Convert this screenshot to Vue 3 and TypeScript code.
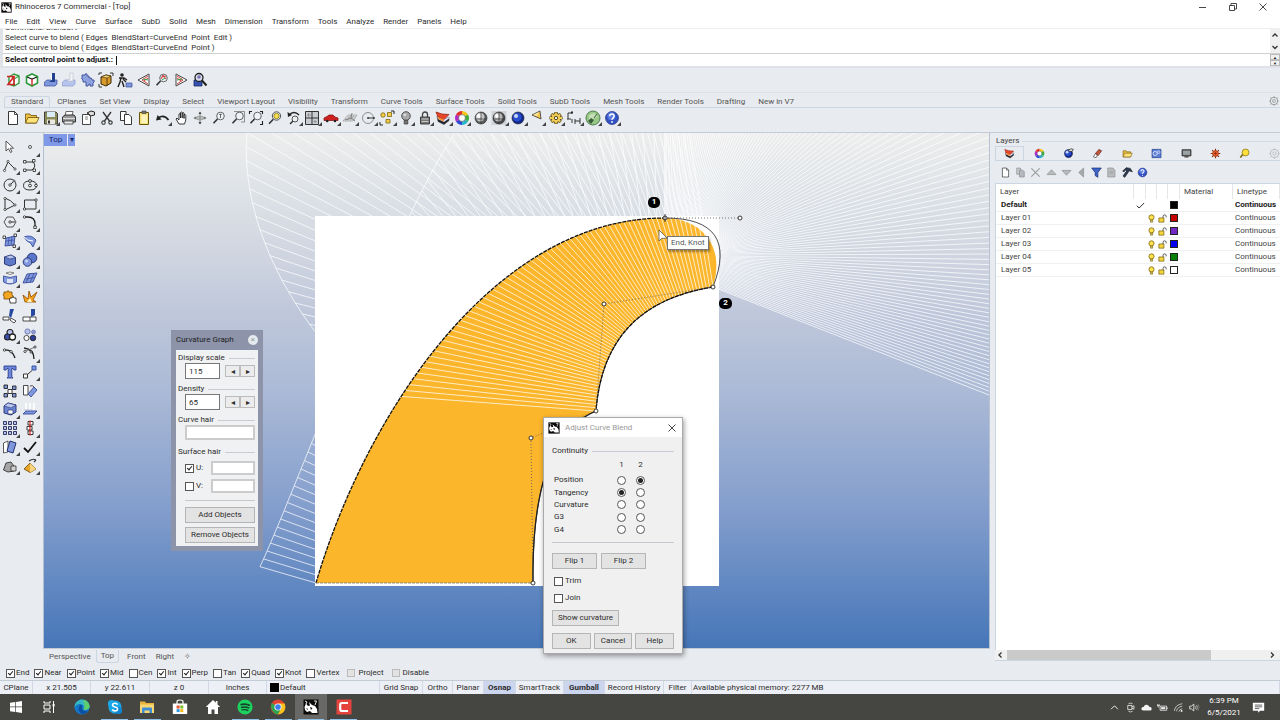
<script setup lang="ts">
import { h, ref } from 'vue'

type Shape = [d: string, fill?: string, stroke?: string, width?: number]
type Point = [number, number]

const c = (x: number, y: number, r: number) =>
  `M${x - r} ${y}a${r} ${r} 0 1 0 ${2 * r} 0a${r} ${r} 0 1 0 ${-2 * r} 0z`
const b = (x: number, y: number, w: number, t: number) => `M${x} ${y}h${w}v${t}h${-w}z`

const N = 'none'
const K = '#222'
const BL = '#7f97dc'
const DB = '#3a4d9c'

const sphere = (dark: string, mid: string, light: string): Shape[] => [
  [c(8, 8, 6), dark, K, 0.6],
  [c(7.2, 7.2, 4.4), mid],
  [c(6, 6, 2), light],
]
const wheel: Shape[] = [
  ['M8 8L8 1A7 7 0 0 1 14 4.5z', '#f5c518'],
  ['M8 8L14 4.5A7 7 0 0 1 14 11.5z', '#3fae3a'],
  ['M8 8L14 11.5A7 7 0 0 1 8 15z', '#2bb5c8'],
  ['M8 8L8 15A7 7 0 0 1 2 11.5z', '#2c49d6'],
  ['M8 8L2 11.5A7 7 0 0 1 2 4.5z', '#b02bc8'],
  ['M8 8L2 4.5A7 7 0 0 1 8 1z', '#e2302c'],
  [c(8, 8, 3.4), '#fff', '#555', 0.6],
]
const layers: Shape[] = [
  ['M2 6L9 10L14 7V10.5L9 14.5L3 11.5z', '#26262e', K, 0.5],
  ['M2 6L9 9.5L14 7V8.5L9 12L3 9z', '#dfe0ff'],
  ['M1 2L7 4L14 4.5L9 9.5L3 7z', '#e8452a', '#8c1b0c', 0.7],
  ['M3 7L9 9.5V11.5L3 9z', '#f58a34'],
]
const help: Shape[] = [
  [c(8, 8, 6.4), '#3352c4', '#1f2f86', 0.8],
  [c(7.4, 6.2, 3.9), '#5a7ae0'],
  ['M5.8 6.2C5.8 3.4 10.2 3.4 10.2 6.1C10.2 7.9 8 7.8 8 9.8', N, '#fff', 1.5],
  [c(8, 12, 0.9), '#fff'],
]
const page: Shape[] = [['M3.5 1.5H9.5L12.5 4.5V14.5H3.5z', '#fff', K, 0.9], ['M9.5 1.5V4.5H12.5', N, K, 0.8]]
const folder: Shape[] = [
  ['M1.5 4H6L7 5.5H12.5V13H1.5z', '#f0c040', '#6b5208', 0.8],
  ['M4 7.5H15L12.5 13H1.5z', '#ffe27a', '#6b5208', 0.8],
]
const lens: Shape[] = [[c(9.5, 6, 3.8), '#eef3f8', '#555', 0.9], ['M6.5 9L2.5 13.3', N, '#333', 1.6]]
const rhino: Shape[] = [
  [b(0.5, 0.5, 15, 15), '#0a0a0a'],
  ['M1.5 8L3 4.5L5 7L7 6.5L6 3L9 6L12 7L14 10L14.5 14H9L7 12L4 13L2 11z', '#fff'],
  ['M11 2L13.5 2L12 6M2 2L4 3L3 5', N, '#fff', 0.9],
  ['M7 8L9.5 9L8 11zM3.5 9L5 10L4 11z', '#0a0a0a'],
]

const icons: Record<string, Shape[]> = {
  rhino, layers, wheel, help, page, folder,
  cubeRed: [['M4 5L9 2L14 4V11L9 14L4 12z', '#fff', '#2f9c3c', 1.4], ['M9 7L14 4M9 7V14', N, '#2f9c3c', 1.1], ['M2 4.5H9L3 12.5H10M9 4.5V12', N, '#d02424', 1.6]],
  cubeGreen: [['M2.5 4.5L8 2L13.5 4.5V11L8 14L2.5 11z', '#fff', '#2f9c3c', 1.6], ['M3 5L8 7L13 5', N, '#222', 1.2], ['M8 7V13.5', N, '#d02424', 1.4]],
  pinBlue: [['M1.5 10L4 8H14V12L12 14H1.5z', BL, DB, 0.7], ['M9 1H12V10H6L9 8z', '#23408f'], ['M8.5 2V8', N, '#fff', 1]],
  pinPale: [['M1.5 10L4 8H14V12L12 14H1.5z', '#b6c4ec', '#8b9bd0', 0.7], ['M9 1H12V9H6L9 7z', '#f4f5f8', '#b9bdc6', 0.6]],
  puzzle: [['M2 3H5Q5 1 7 2L7 4H9V6Q12 5 12 8H14Q15 10 13 11V14H10V12Q8 12 8 14H6V10H3V8Q1 7 2 6z', '#8ea2dd', DB, 0.9]],
  boxGold: [['M3 5L8 3L13 4V11L8 14L3 12z', '#d89a2c', '#3d2b07', 1], ['M3 5L9 6L13 4L8 3z', '#f7d27b', '#3d2b07', 0.6], ['M9 6V14', N, '#3d2b07', 0.8], ['M1 3V1H4M12 1H15V4M1 12V15H4', N, K, 0.9]],
  person: [[c(5, 3, 1.8), K], ['M2 6H7L10 8M4 6L3 10L1 15M5 9L7 15M6 7L9 10', N, K, 1.4], [b(9, 11, 6, 4), BL, DB, 0.7]],
  triLeft: [['M13 2V14L2 8z', '#fff', '#444', 1], ['M12 4L6 8L12 12M12 6L8 9', N, '#cc3a3a', 1], ['M12 8L7 7', N, '#2f9c3c', 1]],
  zoomTri: [...lens, ['M7 7L9 3L12 7M8 5L12 4', N, '#cc3a3a', 1], ['M8 8L11 6', N, '#2f9c3c', 1]],
  triRight: [['M3 2V14L14 8z', '#fff', '#444', 1], ['M4 4L10 8L4 12M4 6L8 9', N, '#cc3a3a', 1], ['M4 8L9 7', N, '#2f9c3c', 1]],
  zoomCyl: [['M2 8H10V14H2z', '#3552b0', '#1a2a66', 0.8], [c(7, 5.5, 4), '#d9e0ef', '#222', 1.3], [c(7, 5, 1.8), '#7d6fb0'], ['M10 8.5L14.5 13.5', N, '#222', 2]],

  save: [['M1.5 2H13L14.5 3.5V14H1.5z', '#8c8c5a', '#333', 0.9], [b(4, 2, 8, 5), '#d9ecf7'], [b(4, 9.5, 8, 4.5), '#e9e9e0'], [b(5, 10.5, 2, 3), '#333']],
  print: [['M5 1.5H12L11 6H4z', '#fff', '#444', 0.8], ['M1.5 7L4 5H13L14.5 7V12H1.5z', '#999', '#222', 0.9], ['M2 8.5H14', N, '#ddd', 1], ['M3 11H12V14H3z', '#eee', '#333', 0.8]],
  props: [['M2.5 4.5H10.5V14.5H2.5z', '#fff', '#333', 0.9], ['M7 3L11 1L14.5 2V5L10 6L9 4z', '#ddd', '#222', 1], ['M5 7H8M5 9H8', N, '#666', 0.8]],
  cut: [['M4 2L10.5 11M12 2L5.5 11', N, '#333', 1.3], [c(4.5, 12.6, 1.7), N, '#333', 1.1], [c(11.5, 12.6, 1.7), N, '#333', 1.1]],
  copy: [['M2.5 1.5H8V10.5H2.5z', '#fff', K, 0.9], ['M6.5 4.5H11L13.5 7V14.5H6.5z', '#fff', K, 0.9]],
  paste: [['M3.5 2.5H12.5V14.5H3.5z', '#f8e27c', '#66570f', 1], [b(6, 1, 4, 2.5), '#777', '#333', 0.6], ['M5.5 5H11V13H5.5z', '#fdf3bd']],
  undo: [['M3 8Q9 4 13.5 10', N, K, 1.8], ['M1 10.5L2.5 5L6.5 9.5z', K]],
  hand: [['M5 14L2 9L3 8L5 10V4Q6 3 6.5 4V8V2.5Q7.5 1.5 8.2 2.5V8V3Q9.2 2 10 3V8.5V4.5Q11.5 4 11.8 5.5V10L10.5 14z', '#fff', K, 0.9]],
  orbit: [['M8 2V14M2 8H14', N, '#777', 0.8], ['M3 8Q8 4 13 8Q8 12 3 8z', N, '#777', 0.7], ['M6.5 4L8 1.5L9.5 4zM6.5 12L8 14.5L9.5 12z', '#444'], ['M4 6.5L1.5 8L4 9.5zM12 6.5L14.5 8L12 9.5z', '#777']],
  zoomDyn: [...lens, ['M9.5 4V8M8.3 5L9.5 3.8L10.7 5', N, '#444', 0.8]],
  zoomWin: [...lens, ['M4 1.5H14.5V12H11', N, '#777', 0.8]],
  zoomExt: [...lens, ['M1.5 4V1.5H4M12 1.5H14.5V4M14.5 11V14.5H12', N, K, 1.1]],
  zoomSel: [[c(9.5, 6, 4.2), '#e9eef3', '#444', 0.9], [c(9.5, 6, 2.7), '#f6df4d', '#7a690d', 0.7], ['M6.3 9.2L2 13.8', N, '#333', 1.6]],
  undoView: [['M3 5Q8 0 13 5', N, K, 1.4], ['M1.5 2L2 7L6 5z', K], [c(9, 9, 3), '#eee', '#444', 0.9], ['M7 11L4 14', N, '#333', 1.5]],
  views: [['M1.5 1.5H14.5V14.5H1.5z', '#c9ccd0', '#333', 1], ['M8 1.5V14.5M1.5 8H14.5', N, '#333', 1], ['M4.5 3V7M3 5H7M11 10V13M9.5 11.5H13', N, '#777', 0.6]],
  car: [['M1 8L4 6.5L6 5H10L12 7L15 8V10.5H1z', '#cf2020', '#7d0c0c', 0.7], [c(4.2, 11, 1.3), '#222'], [c(12, 11, 1.3), '#222']],
  cplane: [['M1 11L6 5H15L11 11zM3 9H13M5 7H14M5 11L9 5M8 11L12 5', N, '#999', 0.7], ['M3 10L9 8L10 3M9 8L13 11', N, '#777', 0.9]],
  circleLine: [[c(7, 8, 5.5), N, '#777', 0.8], ['M7 8H13', N, '#333', 1], [c(7, 8, 0.9), '#333'], [c(13, 8, 0.9), '#333']],
  snapShapes: [[c(4, 5, 2.2), '#f4cf4d', '#7c640c', 0.8], [b(8.5, 2.5, 4, 4), '#f4cf4d', '#7c640c', 0.8], [b(7, 9.5, 4, 3.5), '#f4cf4d', '#7c640c', 0.8], ['M1 12V15H4M12 1H15V4', N, K, 1]],
  bulb: [[c(8, 6, 4.3), '#aaa', '#444', 0.9], ['M6.2 10.3H9.8V14H6.2z', '#777', '#333', 0.7], [c(6.8, 4.8, 1.4), '#ddd']],
  lock: [['M5.5 7V4.5Q5.5 2 8 2Q10.5 2 10.5 4.5V7', N, '#444', 1.3], [b(3.5, 7, 9, 7), '#777', '#333', 0.9], ['M4.5 9H11.5M4.5 11.5H11.5', N, '#ddd', 0.8]],
  sphereA: [...sphere('#5a5a5a', '#c9c9c9', '#fff'), ['M8 2V14M2.5 9H13.5', N, '#333', 0.7]],
  sphereB: [[b(0.5, 1, 15, 14), '#cfd3d8'], ...sphere('#4c4c4c', '#b9b9b9', '#fff'), ['M8 2V14M2.5 9H13.5', N, '#333', 0.7]],
  sphereBlue: sphere('#12268e', '#2a4fcc', '#c9d8ff'),
  spot: [['M3 5L11 1L12 9z', '#f7c548', '#444', 0.9], ['M4 5L10 2L8 6z', '#fde7a4']],
  gear: [['M8 2V4.5M8 11.5V14M1.5 8H4M12 8H14.5M3.2 4.2L5.2 5.7M10.8 10.3L12.8 11.8M3.2 11.8L5.2 10.3M10.8 5.7L12.8 4.2', N, '#4e3e08', 3.2], [c(8, 8, 4.6), '#f2cd57', '#4e3e08', 0.9], ['M8 2.5V4.5M8 11.5V13.5M2 8H4M12 8H14M3.6 4.5L5.2 5.7M10.8 10.3L12.4 11.5M3.6 11.5L5.2 10.3M10.8 5.7L12.4 4.5', N, '#f2cd57', 1.8], [c(8, 8, 1.7), '#e9ecef', '#4e3e08', 0.9]],
  dims: [['M2 3H6M2 3V9M1 9H5M6 9V13M9 9V14M9 11H14M14 8V14', N, '#333', 1], [b(5, 1.5, 2, 2), K]],
  globe: [[c(8, 8, 7), '#97c984', '#48734a', 0.9], ['M4 5L9 3L13 7L9 8L7 12L4 10z', '#c4dfb8'], ['M3 11L6 8L9 10L6 14z', '#3a5c38'], ['M9 8L12 4', N, '#3a5c38', 1]],

  pointer: [['M4 2V12L6.5 9.7L8.5 13.5L10 12.7L8.2 9.2H11.5z', '#fff', '#444', 0.9]],
  point: [[c(8, 8, 1.5), '#fff', '#444', 0.9]],
  polyline: [['M2 13L6 4L13 11', N, '#333', 1], [c(2.5, 12.5, 1.1), '#fff', K, 0.7], [c(6, 3.5, 1.1), '#fff', K, 0.7], [c(13, 11, 1.1), '#fff', K, 0.7]],
  ctrlCurve: [['M3 4H11Q15 8 10 12H3', N, '#333', 1], [b(1.5, 2.5, 2.5, 2.5), '#fff', K, 0.8], [b(10.5, 1.5, 2.5, 2.5), '#fff', K, 0.8], [b(1.5, 11, 2.5, 2.5), '#fff', K, 0.8], [b(11, 11, 2.5, 2.5), '#fff', K, 0.8]],
  circle: [[c(8, 8, 6), N, '#333', 1], ['M8 8L12 4', N, '#333', 1], [c(8, 8, 1.2), '#fff', K, 0.8], [c(12, 4, 1), '#fff', K, 0.7]],
  ellipse: [['M1.5 8.5Q1.5 4 8 4Q14.5 4 14.5 8.5Q14.5 13 8 13Q1.5 13 1.5 8.5z', N, '#333', 1], [c(8, 8.5, 1.4), '#fff', K, 0.9], [c(8, 4, 1.4), '#fff', K, 0.9], [c(14, 8.5, 1.3), '#fff', K, 0.9]],
  arcTri: [['M3 2V14L13 9Q9 4 3 2', N, '#333', 1], [c(3, 2.5, 1.1), '#fff', K, 0.7], [c(3, 13.5, 1.1), '#fff', K, 0.7], [c(13, 9, 1.1), '#fff', K, 0.7]],
  rect: [[b(2.5, 4, 11.5, 9), N, '#333', 1], [c(2.5, 13, 1.2), '#fff', K, 0.8], [c(14, 4, 1.2), '#fff', K, 0.8]],
  polygon: [['M5 3H11L14 8L11 13H5L2 8z', N, '#444', 0.9], ['M8 8H13', N, '#333', 1], [c(8, 8, 1.2), '#fff', K, 0.8]],
  fillet: [['M2 3H6Q13 3 13 10V14', N, '#222', 1.3], [c(2.5, 3, 1.2), '#fff', K, 0.8], [b(11.8, 12, 2.5, 2.5), '#fff', K, 0.8]],
  surfPts: [['M4 5L13 3L12 12L3 13z', BL, DB, 0.9], ['M7 4L6 13M10 3.5L9 12.5M3.5 8L12.5 7', N, DB, 0.7], [b(1, 3, 2.5, 2.5), '#fff', K, 0.8], [b(12, 1, 2.5, 2.5), '#fff', K, 0.8], [b(11, 12, 2.5, 2.5), '#fff', K, 0.8]],
  surfEdge: [['M2 4Q9 1 14 7L11 14Q9 9 5 8z', BL, DB, 0.9], ['M2 4Q5 8 11 8', N, '#fff', 1]],
  cube: [['M2.5 5L9 3L13.5 5.5V12L8 14L2.5 12z', '#5f79c9', '#22306f', 0.9], ['M2.5 5L9 3L13.5 5.5L8 7z', '#b8c6f0', '#22306f', 0.6]],
  spheres: [[c(10, 6, 4.8), '#5a76cc', '#22306f', 0.9], [c(5.5, 10, 4.3), '#7f97dc', '#22306f', 0.9], [c(4.5, 9, 1.5), '#c7d3f7']],
  pipe: [['M1.5 6Q8 9 14.5 6V12Q8 16 1.5 12z', BL, DB, 0.9], ['M5 9H11V13H5z', '#dfe5f7'], ['M4 3Q8 1 12 3Q8 6 4 3z', '#fff', '#666', 0.8]],
  mesh: [['M5 4L15 3L11 12L1 13z', BL, DB, 0.9], ['M8 3.5L4 13M12 3.5L8 12.5M3.5 9L13 7.5', N, DB, 0.8]],
  puzzleGold: [['M2 3H5Q6 0 7 3H10V6Q13 7 10 9V10H2V7Q0 5 2 5z', '#f5a623', '#7a4a05', 0.8], ['M8 9H10Q11 6 12 9H14V14H8V12Q6 11 8 10z', '#fff', K, 0.8]],
  explode: [['M3 13L1 6L6 10L7 2L9 8L15 3L11 11L14 13z', '#f9a11b', '#8a4c00', 0.8], ['M5 13L8 9L10 13z', '#fff4c0']],
  trim: [['M8 1H12L9 10L7 8z', '#27499f'], ['M1 9H7V12H1z', '#fff', K, 0.8], ['M9 10L14 13L12 15L8 12z', '#fff', K, 0.8]],
  split: [['M9 1H13V7L9 9z', '#27499f'], ['M1 9H14V13H1z', '#fff', K, 0.8], ['M8 9V13', N, K, 0.8]],
  circles3: [[c(8, 5.5, 3), '#b8c1ec', K, 1.1], [c(5.5, 10, 3), '#3b4fae', K, 1.1], [c(10.5, 10, 3), '#fff', K, 1.3]],
  circles4: [[c(5.5, 4.5, 2.6), '#b8c1ec', '#6a74b0', 0.9], [c(11.5, 5, 2), '#8f9ad8', '#6a74b0', 0.7], [c(4.5, 11, 2.6), '#fff', K, 0.8], [c(11, 11, 2.8), '#2b3d96', K, 0.8]],
  curveEnd: [['M2 5Q10 4 13 13', N, '#222', 1.4], [c(2.5, 5, 1.2), '#fff', K, 0.8], [c(9, 6.7, 1.2), '#fff', K, 0.8]],
  curveHandle: [['M2 3Q12 4 12 14', N, '#222', 1.3], ['M4 6L13 2', N, '#555', 0.8], [c(3, 6.5, 1.1), '#fff', K, 0.8], [c(13, 2, 1.1), '#fff', K, 0.8], [c(9, 7, 1.1), '#fff', K, 0.8]],
  text: [['M2 2H14V6H12L11 4.5H9.8V12.5L11 14H5L6.2 12.5V4.5H5L4 6H2z', '#6d88dc', '#2a3c8c', 0.9]],
  move: [[b(1.5, 10, 4, 4), '#fff', K, 0.9], [b(10, 2, 4, 4), BL, '#27499f', 0.9], ['M6 10L10 6.5', N, '#333', 1]],
  array: [[b(2, 2, 3.5, 3.5), BL, K, 0.9], [b(10.5, 3, 3.5, 3.5), BL, K, 0.9], [b(6, 6.5, 4, 4), '#fff', K, 0.9], [b(2, 10.5, 3.5, 3.5), BL, K, 0.9], [b(10.5, 10.5, 3.5, 3.5), BL, K, 0.9]],
  rotate: [['M1.5 2.5H6V12H1.5z', '#fff', K, 0.8], ['M12 4L15 7L9 14L6 11z', BL, DB, 0.9], ['M8 3Q11 2 12 4', N, K, 0.8]],
  solidCut: [['M2 5L6 2L14 4V11L9 14L2 12z', '#6c86d4', '#22306f', 0.9], ['M2 5L9 7L14 4L6 2z', '#b8c6f0', '#22306f', 0.6], ['M6 9H11V13H6z', '#fff', '#22306f', 0.7]],
  project: [['M1 13L4 10H15L12 13z', BL, DB, 0.9], ['M4 2V9M8 2V9M12 2V9', N, '#fff', 1.6], ['M2.5 8L4 10L5.5 8M6.5 8L8 10L9.5 8', N, '#9ba8cc', 0.7]],
  grid9: [[[1.5, 6.5, 11.5].map(x => [1.5, 6.5, 11.5].map(y => b(x, y, 3, 3)).join('')).join(''), '#b9c4ee', '#222a55', 0.9]],
  align: [[b(6, 1.5, 5, 3.5), '#fff', K, 0.9], [b(5, 6.5, 5, 3.5), '#fff', K, 0.9], [b(6, 11, 5, 3.5), '#fff', K, 0.9], ['M8 0.5V15.5', N, '#d02424', 1.2]],
  flow: [['M1.5 4L6 2V13L1.5 14z', '#fff', '#333', 0.8], ['M8 2L14 4L11 14L5 12z', BL, '#22306f', 1]],
  check: [['M2 9L6 13L14 3', N, '#111', 1.8]],
  prims: [['M1.5 12L4 5L9 4L12 8V13L6 14z', '#a5a5a5', '#333', 0.9], ['M9 8H14V13H9z', '#d2d2d2', '#333', 0.8]],
  pyramid: [['M2 11L8 5L14 11L8 14.5z', '#e7a52b', '#6b4503', 0.8], ['M8 5L14 11L8 14.5z', '#f8d582'], ['M7 3Q11 0 14 2M14 2L12 4', N, '#333', 1.1]],

  sphereHand: [...sphere('#12268e', '#2a4fcc', '#c9d8ff'), ['M8 3L12 1L15 2L13 5L9 5z', '#ddd', '#222', 1]],
  material: [['M2 13L5 8L8 10L6 14z', '#fff', '#333', 0.9], ['M5 8L10 2L14 4L9 11z', '#c8543c', '#4c1f12', 0.9]],
  texture: [[b(1.5, 2, 13, 12), '#5b7ed3', '#1e3c8a', 1], [c(6, 8, 3), N, '#e8eeff', 1.2], [c(11, 6, 2), N, '#e8eeff', 1]],
  monitor: [[b(1.5, 2.5, 13, 9), '#666', K, 1.1], [b(3, 4, 10, 6), '#9aa2a5'], [b(5, 12, 6, 1.8), '#333']],
  sun: [['M8 1V15M1 8H15M3 3L13 13M13 3L3 13', N, '#8a2d10', 1.6], [c(8, 8, 4.3), '#e85a28', '#8a2d10', 0.8], ['M6 8H10M8 6V10', N, '#5c1d08', 0.8]],
  lamp: [['M2 14L5.5 9', N, '#7a6a12', 2.4], [c(9.5, 6.5, 5), '#ffdf3a', '#7a6a12', 1]],
  copyGrey: [['M2.5 1.5H8V10.5H2.5z', '#c5c8cc', '#888', 0.9], ['M6.5 4.5H11L13.5 7V14.5H6.5z', '#b5b8bd', '#888', 0.9]],
  cross: [['M2 2L14 14M14 2L2 14', N, '#9a9a9a', 1.6]],
  up: [['M1.5 11L8 4L14.5 11z', '#b8babd', '#8c8c8c', 1]],
  down: [['M1.5 5L8 12L14.5 5z', '#b8babd', '#8c8c8c', 1]],
  left: [['M11 1.5L4 8L11 14.5z', '#a8aaad', '#8c8c8c', 1]],
  filter: [['M1 1.5H15L10 8V15L6 12.5V8z', '#3e63c9', '#1d2f72', 1]],
  pageGrey: [['M2.5 1.5H10L13 4.5V14.5H2.5z', '#bcbec1', '#8c8c8c', 1], ['M5 6H11M5 8H11M5 10H11', N, '#999', 0.8]],
  hammer: [['M1 6L6 1L12 2L15 7L10.5 5.5L4 15L1.5 13L7 5.5L5 4.5L3 7z', '#2b3a55', '#111', 0.9]],
  bulbOn: [[c(8, 6, 4.6), '#ffe14d', '#6e5a0b', 1.3], ['M6 11H10V14.5H6z', '#d9c760', '#6e5a0b', 1]],
  unlock: [[b(1.5, 7, 9, 7.5), '#f4d53c', '#6e5a0b', 1.2], ['M9 7V4Q9 1.5 11.5 1.5Q14.5 1.5 14.5 4V6', N, '#444', 1.5]],
  tick: [['M1.5 8.5L5.5 12.5L14.5 3.5', N, '#111', 1.6]],
  options: [[c(8, 8, 6), N, '#888', 1.2], [c(8, 8, 2.4), N, '#888', 1.1], ['M8 0.5V3M8 13V15.5M0.5 8H3M13 8H15.5M2.5 2.5L4 4M12 12L13.5 13.5M2.5 13.5L4 12M12 4L13.5 2.5', N, '#888', 1.2]],

  windows: [['M2 3.8L7.3 3V7.6H2zM8 2.9L14 2V7.6H8zM2 8.3H7.3V13L2 12.2zM8 8.3H14V14L8 13.1z', '#fff']],
  taskview: [['M3 2V4H9V2M3 14V12H9V14M3 6H9V10H3zM12.5 2V14', N, '#fff', 1], [b(11.6, 5, 2, 2.4), '#fff']],
  edge: [[c(8, 8, 7.6), '#1677c8'], ['M0.6 9C0 3 5 .4 8 .4C13 .4 15.6 4 15.6 7.5C15.6 10 12 11.5 9.5 10.5C11 8 9 5 6 5C3.5 5 1 6.5 .6 9z', '#35b8c4'], ['M9 1Q15 2 15.6 7.5C15.6 10 12 11.5 9.5 10.5Q12 6 9 1z', '#5fcf6a'], ['M6 6Q3 11 7 14.5Q11 16 14 12Q9 13 8 10Q7 7 8.5 6z', '#0b4f9e']],
  skype: [[c(8, 8, 6.6), '#18a7e8'], [c(4.5, 4.5, 3.6), '#18a7e8'], [c(11.5, 11.5, 3.6), '#0f86d4'], ['M10.6 5.6Q9.8 4.2 8 4.2Q5.5 4.2 5.5 6Q5.5 7.4 8 8Q10.6 8.5 10.6 10.1Q10.6 12 8 12Q6 12 5.3 10.4', N, '#fff', 1.5]],
  explorer: [['M1 2.5H6L7 4H15V14H1z', '#e8b33a'], ['M1 5.5H15V14H1z', '#f9d775'], ['M3 14V9.5Q3 8.5 4 8.5H12Q13 8.5 13 9.5V14H10.5V11.5H5.5V14z', '#3f8fd6']],
  store: [['M5 5V2.5Q5 1 8 1Q11 1 11 2.5V5', N, '#fff', 1.2], [b(0.8, 4.5, 14.4, 10.5), '#fff'], [b(4.6, 6.5, 3, 3), '#e8502b'], [b(8.3, 6.5, 3, 3), '#7dba2a'], [b(4.6, 10.1, 3, 3), '#2a9be0'], [b(8.3, 10.1, 3, 3), '#f6b91c']],
  home: [['M8 1L0.8 8H3V15H6.5V10.5H9.5V15H13V8H15.2L12.5 5.4V2H10.8V3.8z', '#fff']],
  spotify: [[c(8, 8, 7.6), '#1ed15f'], ['M3.5 5.8Q8.5 4.2 13 6.6', N, '#17402a', 1.7], ['M4 8.5Q8.5 7.1 12.2 9.2', N, '#17402a', 1.4], ['M4.5 11Q8.3 10 11.3 11.6', N, '#17402a', 1.2]],
  chrome: [[c(8, 8, 7.4), '#e0432f'], ['M8 8L1.8 4Q-.8 10 5.5 15Q7 15.4 8 15.4L11 10z', '#2da44e'], ['M8 4.5H14.6Q17 11 11.5 14.5Q10 15.3 8 15.4L11.5 9z', '#f8c51c'], [c(8, 8, 3.6), '#fff'], [c(8, 8, 2.8), '#3f7ee8']],
  camtasia: [[b(0.5, 0.5, 15, 15), '#e5443c'], ['M12 4H6Q4.2 4 4.2 6V10Q4.2 12 6 12H12', N, '#fff', 2.2]],
  chevron: [['M3 10.5L8 5.5L13 10.5', N, '#fff', 1.3]],
  meet: [['M4 5H10V11H4zM10 7L13 5.5V10.5L10 9', N, '#eee', 1.2], ['M5 2.5Q8 .5 11 2.5M5 13.5Q8 15.5 11 13.5', N, '#eee', 1.1]],
  cloud: [['M3.5 12.5Q0 12 .6 9Q1.5 7 3.8 7.2Q5 3.6 8.5 4Q11.4 4.4 12 7Q15.5 7 15.6 10Q15.4 12.5 13 12.5z', '#f4f4f4']],
  battery: [['M4.5 6H14V12H4.5z', N, '#eee', 1.2], [b(6, 7.5, 6, 3), '#eee'], [b(14, 8, 1.4, 2), '#eee'], ['M1 3V6Q1 7.5 3 7.5M3 3V6M0.5 5H4', N, '#eee', 1.1]],
  wifi: [['M2 13Q3 4 13.5 2.5M5 13.5Q6 7.5 13.5 6M8.5 14Q9.5 10.5 13.5 9.8', N, '#d5d5d5', 1.2], [c(12.5, 13, 1.3), '#fff']],
  sound: [['M1 6H3.5L7 3V13L3.5 10H1z', N, '#fff', 1.1], ['M9 6Q10.5 8 9 10M11 4.5Q13.5 8 11 11.5', N, '#ddd', 1], ['M13 3Q16.5 8 13 13', N, '#888', 0.9]],
  notice: [['M1 2H15V12H10L7.5 14.5V12H1z', '#fff'], ['M3.5 5H12.5M3.5 7.2H12.5M3.5 9.4H9', N, '#444', 1]],
}

const Glyph = (p: { name: string }) =>
  h('svg', { viewBox: '0 0 16 16', class: 'glyph', 'aria-hidden': 'true' },
    (icons[p.name] ?? []).map(([d, fill, stroke, width]) =>
      h('path', { d, fill: fill ?? N, stroke: stroke ?? N, 'stroke-width': width ?? 1 })))
Glyph.props = ['name']

const menus = ['File', 'Edit', 'View', 'Curve', 'Surface', 'SubD', 'Solid', 'Mesh', 'Dimension', 'Transform', 'Tools', 'Analyze', 'Render', 'Panels', 'Help']
const quickTools = ['cubeRed', 'cubeGreen', 'pinBlue', 'pinPale', 'puzzle', 'boxGold', 'person', 'triLeft', 'zoomTri', 'triRight', 'zoomCyl']
const tabs = ['Standard', 'CPlanes', 'Set View', 'Display', 'Select', 'Viewport Layout', 'Visibility', 'Transform', 'Curve Tools', 'Surface Tools', 'Solid Tools', 'SubD Tools', 'Mesh Tools', 'Render Tools', 'Drafting', 'New in V7']
const activeTab = ref('Standard')
const mainTools = ['page', 'folder', 'save', 'print', 'props', 'cut', 'copy', 'paste', 'undo', 'hand', 'orbit', 'zoomDyn', 'zoomWin', 'zoomExt', 'zoomSel', 'undoView', 'views', 'car', 'cplane', 'circleLine', 'snapShapes', 'bulb', 'lock', 'layers', 'wheel', 'sphereA', 'sphereB', 'sphereBlue', 'spot', 'gear', 'dims', 'globe', 'help']
const plain = new Set(['page', 'folder', 'print', 'props', 'cut', 'copy', 'paste', 'hand', 'orbit', 'zoomDyn', 'zoomWin', 'zoomExt', 'zoomSel', 'sphereA', 'pointer', 'puzzleGold', 'explode', 'trim', 'split', 'circles4', 'curveEnd', 'text', 'array', 'rotate'])
const sideTools = ['pointer', 'point', 'polyline', 'ctrlCurve', 'circle', 'ellipse', 'arcTri', 'rect', 'polygon', 'fillet', 'surfPts', 'surfEdge', 'cube', 'spheres', 'pipe', 'mesh', 'puzzleGold', 'explode', 'trim', 'split', 'circles3', 'circles4', 'curveEnd', 'curveHandle', 'text', 'move', 'array', 'rotate', 'solidCut', 'project', 'grid9', 'align', 'flow', 'check', 'prims', 'pyramid']
const panelTabs = ['layers', 'wheel', 'sphereHand', 'material', 'folder', 'texture', 'monitor', 'sun', 'lamp', 'options']
const panelTools = ['page', 'copyGrey', 'cross', 'up', 'down', 'left', 'filter', 'pageGrey', 'hammer', 'help']
const layerRows = [
  { name: 'Default', color: 'black', current: true },
  { name: 'Layer 01', color: 'red', current: false },
  { name: 'Layer 02', color: 'purple', current: false },
  { name: 'Layer 03', color: 'blue', current: false },
  { name: 'Layer 04', color: 'green', current: false },
  { name: 'Layer 05', color: 'white', current: false },
]

const continuity = ['Position', 'Tangency', 'Curvature', 'G3', 'G4']
const side1 = ref('Tangency')
const side2 = ref('Position')
const trim = ref(false)
const join = ref(false)
const command = ref('')
const displayScale = ref('115')
const density = ref('65')
const hairU = ref(true)
const hairV = ref(false)

const snaps = ref([
  { name: 'End', on: true }, { name: 'Near', on: true }, { name: 'Point', on: true },
  { name: 'Mid', on: true }, { name: 'Cen', on: false }, { name: 'Int', on: true },
  { name: 'Perp', on: true }, { name: 'Tan', on: false }, { name: 'Quad', on: true },
  { name: 'Knot', on: true }, { name: 'Vertex', on: false },
  { name: 'Project', on: false, grey: true }, { name: 'Disable', on: false, grey: true },
])
const modes = ['Grid Snap', 'Ortho', 'Planar', 'Osnap', 'SmartTrack', 'Gumball', 'Record History', 'Filter']
const activeModes = ['Osnap', 'Gumball']
const taskApps = ['windows', 'taskview', 'edge', 'skype', 'explorer', 'store', 'home', 'spotify', 'chrome', 'rhino', 'camtasia']
const runningApps = ['skype', 'explorer', 'spotify', 'chrome', 'rhino', 'camtasia']
const tray = ['chevron', 'meet', 'cloud', 'battery', 'wifi', 'sound']

// Curvature comb: hairs along the outward normal, their length proportional to curvature.
function comb(p: Point[], steps: number, scale: (t: number) => number, side: 1 | -1): string {
  const n = p.length - 1
  const lerp = (a: Point[], t: number): Point[] =>
    a.slice(1).map((q, i) => [a[i][0] + (q[0] - a[i][0]) * t, a[i][1] + (q[1] - a[i][1]) * t])
  const tips: string[] = []
  let hairs = ''
  for (let i = 0; i <= steps; i++) {
    const t = i / steps
    let level = p
    while (level.length > 3) level = lerp(level, t)
    const [u, v, w] = level
    const ddx = n * (n - 1) * (u[0] - 2 * v[0] + w[0])
    const ddy = n * (n - 1) * (u[1] - 2 * v[1] + w[1])
    const [a, z] = lerp(level, t)
    const dx = n * (z[0] - a[0])
    const dy = n * (z[1] - a[1])
    const x = a[0] + (z[0] - a[0]) * t
    const y = a[1] + (z[1] - a[1]) * t
    const speed = Math.hypot(dx, dy)
    const length = (Math.abs(dx * ddy - dy * ddx) / speed ** 3) * scale(t) * side
    const tip = `${(x + (dy / speed) * length).toFixed(1)} ${(y - (dx / speed) * length).toFixed(1)}`
    hairs += `M${x.toFixed(1)} ${y.toFixed(1)}L${tip}`
    tips.push(tip)
  }
  return `${hairs}M${tips.join('L')}`
}
const combs = [
  comb([[316, 583], [363, 422], [490, 218], [665, 218]], 65, t => 38000 + 10500 * t, 1),
  comb([[713, 287], [604, 304], [596, 411]], 65, () => 48500, -1),
  comb([[665, 218], [740, 218], [713, 287]], 120, () => 48500, 1),
]
const grips: Point[] = [[665, 218], [740, 218], [713, 287], [604, 304], [596, 411], [531, 438], [533, 583]]
</script>

<template>
  <div class="app">
    <header class="title">
      <Glyph name="rhino" />
      <span>Rhinoceros 7 Commercial - [Top]</span>
      <div class="window-buttons">
        <button aria-label="Minimize"><svg viewBox="0 0 8 8"><path d="M0 4.5H7" /></svg></button>
        <button aria-label="Restore"><svg viewBox="0 0 8 8"><path d="M.5 2.5H5.5V7.5H.5zM2 2.5V.5H7.5V6H5.5" /></svg></button>
        <button aria-label="Close"><svg viewBox="0 0 8 8"><path d="M.5 .5L7.5 7.5M7.5 .5L.5 7.5" /></svg></button>
      </div>
    </header>
    <nav class="menu"><button v-for="m in menus" :key="m">{{ m }}</button></nav>

    <section class="command">
      <div class="history">
        <div class="lines">
          <p>Command: BlendCrv</p>
          <p>Select curve to blend ( Edges&nbsp; BlendStart=CurveEnd&nbsp; Point&nbsp; Edit )</p>
          <p>Select curve to blend ( Edges&nbsp; BlendStart=CurveEnd&nbsp; Point )</p>
        </div>
        <div class="scroll-arrows">
          <svg viewBox="0 0 8 8"><path d="M1.5 5.5L4 3L6.5 5.5" /></svg>
          <svg viewBox="0 0 8 8"><path d="M1.5 3L4 5.5L6.5 3" /></svg>
        </div>
      </div>
      <div class="prompt">
        <label for="prompt">Select control point to adjust.:</label>
        <i class="caret"></i>
        <input id="prompt" v-model="command" type="text" />
        <span class="spin"><b>▲</b><b>▼</b></span>
      </div>
    </section>

    <div class="quick">
      <div class="quick-grid">
        <button v-for="q in quickTools" :key="q" :aria-label="q"><Glyph :name="q" /></button>
      </div>
    </div>

    <section class="tools">
      <div class="tabs">
        <button v-for="t in tabs" :key="t" :class="{ active: t === activeTab }" @click="activeTab = t">{{ t }}</button>
        <Glyph class="tabs-gear" name="options" />
      </div>
      <div class="tools-grid">
        <button v-for="m in mainTools" :key="m" :aria-label="m" :class="{ fly: !plain.has(m) }"><Glyph :name="m" /></button>
      </div>
    </section>

    <main class="body">
      <aside class="side">
        <div class="side-grid">
          <button v-for="s in sideTools" :key="s" :aria-label="s" :class="{ fly: !plain.has(s) }"><Glyph :name="s" /></button>
        </div>
      </aside>

      <div class="center">
        <div class="viewport">
          <svg class="scene" width="100%" height="100%">
            <g transform="translate(-44 -133)">
              <rect x="315" y="216" width="404" height="370" fill="#fff" />
              <path fill="#fbb62c" d="M316 583C363 422 490 218 665 218C695 218 727 240 713 287Q604 304 596 411Q531 438 533 583z" />
              <path v-for="k in combs" :key="k" class="comb" :d="k" />
              <path class="edge" d="M665 218Q740 218 713 287Q604 304 596 411Q531 438 533 583" />
              <path class="edge lower" d="M596 411Q531 438 533 583" />
              <path class="edge locus" d="M316 583C363 422 490 218 665 218M713 287Q604 304 596 411" />
              <path class="base" d="M316 583H533" />
              <path class="hull" d="M665 218H740M713 287L604 304L596 411L531 438L533 583" />
              <circle v-for="(g, i) in grips" :key="i" class="grip" :cx="g[0]" :cy="g[1]" r="2" />
              <path class="edge" d="M665 214V222" />
              <path fill="#fff" stroke="#555" stroke-width=".8" d="M659 230V241L661.5 238.5L667 238z" />
            </g>
          </svg>
          <button class="view-name">Top</button>
          <button class="view-drop" aria-label="View menu">▾</button>
          <span class="badge one">1</span>
          <span class="badge two">2</span>
          <span class="tip">End, Knot</span>

          <section class="graph">
            <header>Curvature Graph<button aria-label="Close graph">×</button></header>
            <div class="graph-body">
              <h3><label for="scale">Display scale</label></h3>
              <div class="stepper"><input id="scale" v-model="displayScale" type="text" /><button aria-label="Less">◂</button><button aria-label="More">▸</button></div>
              <h3><label for="density">Density</label></h3>
              <div class="stepper"><input id="density" v-model="density" type="text" /><button aria-label="Sparser">◂</button><button aria-label="Denser">▸</button></div>
              <h3>Curve hair</h3>
              <button class="swatch-wide" aria-label="Curve hair color"></button>
              <h3 class="surface">Surface hair</h3>
              <div class="hair"><label><input v-model="hairU" type="checkbox" />U:</label><button aria-label="U color"></button></div>
              <div class="hair"><label><input v-model="hairV" type="checkbox" />V:</label><button aria-label="V color"></button></div>
              <hr />
              <button class="push">Add Objects</button>
              <button class="push">Remove Objects</button>
            </div>
          </section>

          <section class="blend">
            <header><Glyph name="rhino" /><span>Adjust Curve Blend</span>
              <button aria-label="Close dialog"><svg viewBox="0 0 8 8"><path d="M.5 .5L7.5 7.5M7.5 .5L.5 7.5" /></svg></button>
            </header>
            <div class="blend-body">
              <h3>Continuity</h3>
              <div class="cont-grid">
                <span></span><span class="col">1</span><span class="col">2</span>
                <template v-for="k in continuity" :key="k">
                  <span>{{ k }}</span>
                  <input v-model="side1" type="radio" name="side1" :value="k" :aria-label="k + ' 1'" />
                  <input v-model="side2" type="radio" name="side2" :value="k" :aria-label="k + ' 2'" />
                </template>
              </div>
              <hr />
              <div class="flips"><button class="push">Flip 1</button><button class="push">Flip 2</button></div>
              <label class="opt"><input v-model="trim" type="checkbox" />Trim</label>
              <label class="opt"><input v-model="join" type="checkbox" />Join</label>
              <button class="push show">Show curvature</button>
              <div class="actions"><button class="push">OK</button><button class="push">Cancel</button><button class="push">Help</button></div>
            </div>
          </section>
        </div>
        <nav class="view-tabs">
          <button>Perspective</button><button class="active">Top</button><button>Front</button><button>Right</button><button aria-label="New view">✧</button>
        </nav>
      </div>

      <aside class="panel">
        <h2>Layers</h2>
        <div class="panel-tabs">
          <button v-for="(p, i) in panelTabs" :key="p" :aria-label="p" :class="{ active: i === 0, dim: p === 'options' }"><Glyph :name="p" /></button>
        </div>
        <div class="panel-tools">
          <button v-for="p in panelTools" :key="p" :aria-label="p"><Glyph :name="p" /></button>
        </div>
        <div class="panel-table">
          <table>
            <colgroup><col /><col class="c-tick" /><col class="c-icon" /><col class="c-icon" /><col class="c-tick" /><col class="c-mat" /><col class="c-line" /></colgroup>
            <thead><tr><th>Layer</th><th></th><th></th><th></th><th></th><th>Material</th><th>Linetype</th></tr></thead>
            <tbody>
              <tr v-for="l in layerRows" :key="l.name" :class="{ current: l.current }">
                <td>{{ l.name }}</td>
                <td class="ic"><Glyph v-if="l.current" name="tick" /></td>
                <td class="ic"><Glyph v-if="!l.current" name="bulbOn" /></td>
                <td class="ic"><Glyph v-if="!l.current" name="unlock" /></td>
                <td class="ic"><i class="chip" :class="l.color"></i></td>
                <td></td>
                <td>Continuous</td>
              </tr>
            </tbody>
          </table>
        </div>
        <div class="hscroll">
          <svg viewBox="0 0 8 8"><path d="M5.5 1.5L3 4L5.5 6.5" /></svg>
          <div class="track"><i></i></div>
          <svg viewBox="0 0 8 8"><path d="M3 1.5L5.5 4L3 6.5" /></svg>
        </div>
      </aside>
    </main>

    <div class="snaps">
      <label v-for="s in snaps" :key="s.name" :class="{ grey: s.grey }"><input v-model="s.on" type="checkbox" />{{ s.name }}</label>
    </div>

    <div class="status">
      <button>CPlane</button><span>x 21.505</span><span>y 22.611</span><span>z 0</span><span>Inches</span>
      <button class="layer"><i></i>Default</button>
      <button v-for="m in modes" :key="m" :class="{ on: activeModes.includes(m) }">{{ m }}</button>
      <span class="memory">Available physical memory: 2277 MB</span>
    </div>

    <footer class="taskbar">
      <div class="apps">
        <button v-for="a in taskApps" :key="a" :aria-label="a" :class="{ run: runningApps.includes(a), focus: a === 'rhino' }"><Glyph :name="a" /></button>
      </div>
      <div class="tray"><Glyph v-for="t in tray" :key="t" :name="t" /></div>
      <div class="clock"><span>6:39 PM</span><span>6/5/2021</span></div>
      <Glyph class="notice" name="notice" />
    </footer>
  </div>
</template>

<style>
html, body { margin: 0; background: #e8ebef; }
</style>

<style scoped>
.app { display: flex; flex-direction: column; min-height: 100vh; background: #e8ebef; color: #2c2c2c; font: 8px/10px Roboto, "Open Sans", sans-serif; }
.app *, .app *::before, .app *::after { box-sizing: border-box; }
button, input { font: inherit; color: inherit; margin: 0; padding: 0; border: 0; background: none; border-radius: 0; min-width: 0; }
p, h2, h3, hr { margin: 0; font: inherit; }
.glyph { width: 16px; height: 16px; display: block; flex: none; }
svg { display: block; }

.title { display: flex; align-items: center; height: 14px; padding-left: 1px; gap: 3px; background: #fff; }
.title > .glyph { width: 11px; height: 11px; }
.window-buttons { display: flex; margin-left: auto; padding-right: 2px; }
.window-buttons button { width: 30px; height: 14px; display: grid; place-items: center; }
.window-buttons svg, .blend header svg:not(.glyph) { width: 8px; height: 8px; fill: none; stroke: #333; stroke-width: 0.9; }
.menu { display: flex; align-items: center; gap: 9px; height: 15px; padding: 2px 5px 0; background: #fff; border-bottom: 1px solid #eceef0; }

.command { background: #fff; border-left: 3px solid #dfe3e8; }
.history { display: flex; height: 25px; border-bottom: 1px solid #cdd0d4; }
.lines { flex: 1; overflow: hidden; display: flex; flex-direction: column; justify-content: flex-end; padding-left: 2px; }
.lines p { flex: none; }
.scroll-arrows { width: 10px; background: #f0f0f0; display: flex; flex-direction: column; justify-content: space-around; align-items: center; }
.scroll-arrows svg, .hscroll svg { width: 8px; height: 8px; fill: none; stroke: #333; stroke-width: 1.3; }
.prompt { display: flex; align-items: center; height: 12px; padding-left: 2px; font-weight: 700; color: #111; }
.caret { width: 1px; height: 9px; margin-left: 3px; background: #111; }
.prompt input { flex: 1; height: 10px; outline: 0; }
.spin { width: 10px; display: flex; flex-direction: column; }
.spin b { height: 6px; font-size: 4px; line-height: 5px; text-align: center; border: 1px solid #bbb; background: #f0f0f0; }

.quick { height: 27px; border-top: 2px solid #dfe3e8; border-bottom: 1px solid #dde1e6; padding: 4px 4px; }
.quick-grid { display: grid; grid-template-columns: repeat(11, 1fr); max-width: 205px; }
.quick-grid button, .tools-grid button, .side-grid button { display: grid; place-items: center; position: relative; }
.fly::after { content: ""; position: absolute; right: 0; bottom: 0; border: 2px solid transparent; border-right-color: #444; border-bottom-color: #444; }

.tools { height: 40px; border-bottom: 1px solid #c3cbd5; }
.tabs { display: flex; align-items: stretch; gap: 1px; height: 15px; margin: 0 0 0 4px; padding-top: 3px; border-bottom: 1px solid #ccd5e2; color: #555; }
.tabs button { padding: 0 6px; white-space: nowrap; }
.tabs .active { border: 1px solid #ccd5e2; border-bottom: 0; border-radius: 3px 3px 0 0; }
.tabs-gear { width: 10px; height: 10px; margin-left: auto; margin-right: 1px; }
.tools-grid { display: grid; grid-template-columns: repeat(33, 1fr); max-width: 617px; margin: 2px 0 0 4px; }

.body { flex: 1; display: grid; grid-template-columns: 43px minmax(0, 1fr) 290px; }
.side { padding: 5px 3px 0 0; }
.side-grid { display: grid; grid-template-columns: 1fr 1fr; grid-template-rows: repeat(18, 1fr); height: 337px; }
.center { display: flex; flex-direction: column; }
.viewport { position: relative; flex: 1; border-left: 1px solid #b5bfd2; background: linear-gradient(#ededed 0%, #e2e6e9 8%, #cfd5e0 24%, #bdc6da 36%, #abbad6 50%, #859fcd 72%, #4676b8 100%); border-right: 1px solid #b9c2d0; }
.scene { position: absolute; inset: 0; overflow: hidden; }
.comb { fill: none; stroke: #fff; stroke-width: 1; opacity: 0.72; }
.edge { fill: none; stroke: #222; stroke-width: 0.8; }
.lower { stroke-width: 1.3; }
.locus { stroke: #111; stroke-width: 1.3; stroke-dasharray: 4 1; }
.base { stroke: #777; stroke-width: 0.8; stroke-dasharray: 3 1; }
.hull { fill: none; stroke: #555; stroke-width: 0.8; stroke-dasharray: 1 2; }
.grip { fill: #fff; stroke: #222; stroke-width: 0.9; }
.view-name, .view-drop { position: absolute; top: 1px; height: 12px; background: #7f98e8; color: #14286c; }
.view-name { left: 0; width: 23px; }
.view-drop { left: 24px; width: 7px; line-height: 8px; }
.badge { position: absolute; width: 12px; height: 11px; border-radius: 5px; background: #000; color: #fff; text-align: center; font-weight: 700; }
.one { left: 604px; top: 64px; }
.two { left: 675px; top: 165px; width: 13px; }
.tip { position: absolute; left: 623px; top: 103px; padding: 1px 3px; background: #fff; border: 1px solid #777; box-shadow: 1px 2px 2px #0005; color: #555; white-space: nowrap; }

.graph { position: absolute; left: 127px; top: 197px; width: 92px; padding: 0 5px 5px; background: #8d94aa; }
.graph header { display: flex; align-items: center; justify-content: space-between; height: 20px; color: #222; white-space: nowrap; }
.graph header button { width: 10px; height: 10px; border-radius: 5px; background: #e3ebee; color: #999; line-height: 8px; }
.graph-body { background: #f0f1f2; padding: 3px 3px 3px 9px; height: 196px; }
h3 { display: flex; align-items: center; gap: 4px; height: 10px; white-space: nowrap; }
h3::after { content: ""; flex: 1; border-top: 1px solid #c9cdd3; }
.graph h3 { margin-left: -7px; }
.stepper { display: flex; align-items: center; height: 16px; margin: 0 0 5px; }
.stepper input { width: 35px; height: 16px; padding-left: 3px; border: 1px solid #777; background: #fff; margin-right: 5px; }
.stepper button { width: 15px; height: 12px; border: 1px solid #bbb; background: #ececec; line-height: 9px; }
.swatch-wide { display: block; width: 100%; height: 15px; border: 2px solid #ccc; background: #fff; }
.graph-body .surface { margin-top: 7px; }
.hair { display: flex; justify-content: space-between; align-items: center; height: 14px; margin-top: 4px; }
.hair label, .opt { display: flex; align-items: center; gap: 2px; }
.hair button { width: 44px; height: 14px; border: 2px solid #ccc; background: #fff; }
hr { border: 0; border-top: 1px solid #c5c8cc; }
.graph hr { margin: 7px 0 6px; }
.push { display: block; height: 16px; border: 1px solid #b5b5b5; background: #e3e3e3; white-space: nowrap; }
.graph .push { width: 100%; margin-bottom: 4px; }
input[type="checkbox"], input[type="radio"] { appearance: none; flex: none; width: 9px; height: 9px; border: 1px solid #555; background: #fff; position: relative; }
input[type="checkbox"]:checked::after { content: ""; position: absolute; left: 2px; top: 0; width: 3px; height: 5px; border: solid #222; border-width: 0 1px 1px 0; transform: rotate(40deg); }
input[type="radio"] { border-radius: 50%; }
input[type="radio"]:checked::after { content: ""; position: absolute; inset: 1px; border-radius: 50%; background: #222; }

.blend { position: absolute; left: 499px; top: 284px; width: 140px; background: #f0f0f0; border: 1px solid #aaa; box-shadow: 1px 2px 5px #0006; }
.blend header { display: flex; align-items: center; gap: 5px; height: 19px; padding: 0 6px 0 4px; background: #fff; color: #999; }
.blend header .glyph { width: 12px; height: 12px; }
.blend header button { margin-left: auto; }
.blend header button svg { stroke: #888; }
.blend-body { padding: 9px 8px 4px; height: 216px; }
.cont-grid { display: grid; grid-template-columns: 58px 19px 19px; grid-template-rows: 18px repeat(5, 1fr); height: 80px; align-items: center; justify-items: start; padding: 0 0 0 2px; }
.cont-grid input, .cont-grid .col { justify-self: center; }
.blend hr { margin: 6px 0 10px; }
.flips { display: flex; gap: 4px; margin-bottom: 7px; }
.flips .push { width: 45px; }
.opt { height: 10px; margin: 0 0 7px 2px; }
.show { width: 67px; margin-bottom: 7px; }
.actions { display: flex; gap: 3px; }
.actions .push { flex: 1; }

.view-tabs { display: flex; height: 16px; align-items: center; padding-left: 1px; border-top: 1px solid #c3cbd5; color: #555; }
.view-tabs button { padding: 0 5px; height: 13px; }
.view-tabs .active { border: 1px solid #ccd5e2; border-top: 0; border-radius: 0 0 3px 3px; padding: 0 4px; margin: 0 3px 0 0; }

.panel { display: flex; flex-direction: column; margin: 3px 0 3px 5px; color: #444; }
.panel h2 { height: 10px; padding-left: 1px; display: flex; align-items: center; gap: 3px; }
.panel h2::after { content: ""; flex: 1; border-top: 1px solid #d3d9e2; }
.panel-tabs { display: grid; grid-template-columns: repeat(10, 1fr); height: 15px; margin-right: -9px; border-bottom: 1px solid #ccd5e2; overflow: hidden; }
.panel-tabs button, .panel-tools button { display: grid; place-items: center; }
.panel-tabs .glyph { width: 11px; height: 11px; }
.panel-tabs .active { border: 1px solid #ccd5e2; border-bottom: 0; }
.panel-tabs .dim { opacity: 0.5; }
.panel-tools { display: grid; grid-template-columns: repeat(10, 1fr); width: 152px; height: 22px; margin-left: 3px; }
.panel-tools .glyph { width: 11px; height: 11px; }
.panel-table { flex: 1; background: #fff; border: solid #ccd5e2; border-width: 1px 0 0 1px; overflow: hidden; }
table { width: 100%; table-layout: fixed; border-spacing: 0; }
.c-tick { width: 12px; }
.c-icon { width: 11px; }
.c-mat { width: 53px; }
.c-line { width: 47px; }
th { height: 15px; padding: 0 0 0 4px; text-align: left; font-weight: 400; border-right: 1px solid #e4e7ea; }
td { height: 13px; padding: 0 0 0 5px; white-space: nowrap; border-bottom: 1px solid #f0f0f0; }
td:last-child { padding-left: 2px; }
td.ic { padding: 0; }
.ic .glyph { width: 9px; height: 9px; margin: 0 auto; }
.current { font-weight: 700; color: #222; }
.chip { display: block; width: 8px; height: 8px; margin: 0 auto; border: 1px solid #222; }
.black { background: #000; }
.red { background: #c40000; }
.purple { background: #7328c4; }
.blue { background: #0000f5; }
.green { background: #088008; }
.white { background: #fff; }
.hscroll { display: flex; align-items: center; gap: 3px; height: 11px; padding: 0 4px 0 1px; background: #f0f0f0; border-bottom: 1px solid #ccd5e2; }
.track { flex: 1; height: 10px; }
.track i { display: block; width: 79%; height: 10px; background: #cacaca; }

.snaps { display: flex; align-items: center; gap: 5px; height: 16px; padding: 2px 6px 0; }
.snaps label { display: flex; align-items: center; gap: 1px; }
.snaps .grey { margin-left: 3px; gap: 3px; }
.snaps .grey input { border-color: #bbb; background: #e2e2e2; width: 8px; height: 8px; }
.status { display: grid; grid-template-columns: 33px 58px 59px 59px 58px 113px 43px 30px 31px 32px 48px 41px 59px 28px 1fr; height: 14px; border-top: 1px solid #c3cbd5; background: #eceff5; text-align: center; white-space: nowrap; line-height: 13px; }
.status > * { border-right: 1px solid #d3d9e4; }
.status .layer { display: flex; align-items: center; gap: 1px; padding-left: 3px; }
.layer i { width: 9px; height: 9px; background: #000; }
.status .on { background: #ccd5ee; font-weight: 700; }
.status .memory { text-align: left; padding-left: 1px; }
.taskbar { display: flex; align-items: center; height: 26px; background: #454542; color: #fff; }
.apps { display: grid; grid-template-columns: repeat(11, 1fr); width: 360px; height: 26px; }
.apps button { display: grid; place-items: center; position: relative; }
.apps .focus { background: #686866; }
.apps .run::after { content: ""; position: absolute; left: 3px; right: 3px; bottom: 0; height: 1px; background: #8fc0ea; }
.tray { display: flex; gap: 5px; margin-left: auto; }
.tray .glyph { width: 11px; height: 11px; }
.clock { display: flex; flex-direction: column; align-items: center; gap: 2px; width: 48px; }
.taskbar .notice { width: 13px; height: 13px; margin: 0 15px 0 4px; }
</style>
